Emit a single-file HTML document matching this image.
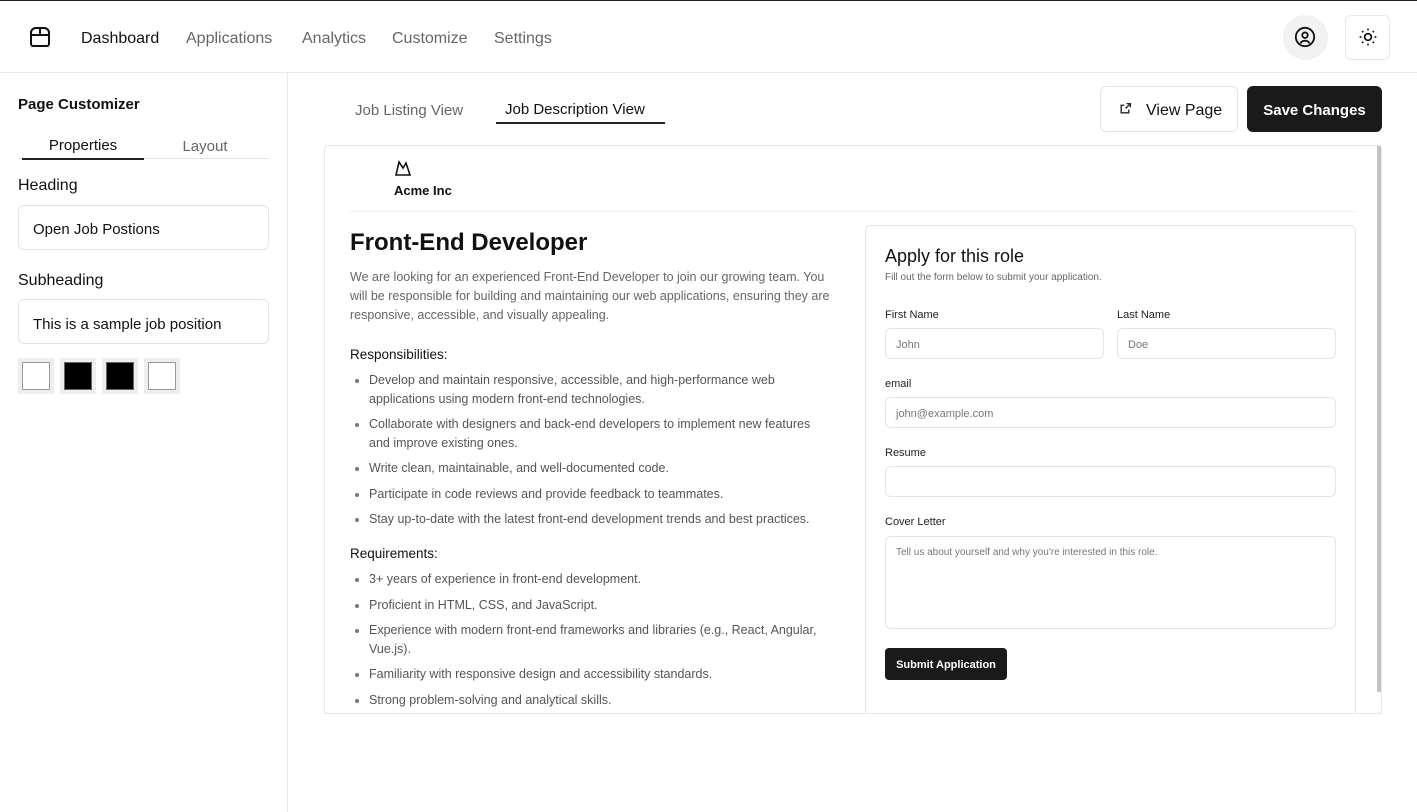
<!DOCTYPE html>
<html><head><meta charset="utf-8"><style>
*{box-sizing:border-box;margin:0;padding:0}
body{width:1417px;height:812px;overflow:hidden;background:#fff;font-family:"Liberation Sans",sans-serif;color:#111;position:relative}
.a{position:absolute}
.nav{font-size:16px;color:#666;top:30px}
.inp{border:1px solid #e4e4e4;border-radius:6px;background:#fff}
.lbl{font-size:11px;color:#222}
.ph{font-size:11px;color:#777;padding:0 10px;display:flex;align-items:center}
ul{list-style:disc;padding-left:19px;font-size:12.5px;color:#555;line-height:18.5px}
li{margin-bottom:7px}
li::marker{color:#777}
</style></head><body>
<div class="a" style="top:0;left:0;width:1417px;height:1px;background:#222"></div>
<svg class="a" style="left:28px;top:25px" width="24" height="24" viewBox="0 0 24 24" fill="none" stroke="#111" stroke-width="2"><path d="M3 9a5 5 0 0 1 5-6h8a5 5 0 0 1 5 6v10a2 2 0 0 1-2 2H5a2 2 0 0 1-2-2z"/><path d="M3 10h18M12 3v7"/></svg>
<div class="a nav" style="left:81px;color:#111">Dashboard</div>
<div class="a nav" style="left:186px">Applications</div>
<div class="a nav" style="left:302px">Analytics</div>
<div class="a nav" style="left:392px">Customize</div>
<div class="a nav" style="left:494px">Settings</div>
<div class="a" style="left:1283px;top:15px;width:45px;height:45px;border-radius:50%;background:#f2f2f2"></div>
<svg class="a" style="left:1294px;top:26px" width="22" height="22" viewBox="0 0 24 24" fill="none" stroke="#111" stroke-width="2"><circle cx="12" cy="12" r="10"/><circle cx="12" cy="10" r="3"/><path d="M7 19c1-2 3-3 5-3s4 1 5 3"/></svg>
<div class="a" style="left:1345px;top:15px;width:45px;height:45px;border-radius:6px;border:1px solid #e8e8e8"></div>
<svg class="a" style="left:1358px;top:27px" width="20" height="20" viewBox="0 0 24 24" fill="none" stroke="#111" stroke-width="2"><circle cx="12" cy="12" r="4"/><path d="M12 2v2M12 20v2M4.9 4.9l1.4 1.4M17.7 17.7l1.4 1.4M2 12h2M20 12h2M4.9 19.1l1.4-1.4M17.7 6.3l1.4-1.4"/></svg>
<div class="a" style="top:72px;left:0;width:1417px;height:1px;background:#e8e8e8"></div>
<div class="a" style="top:72px;left:287px;width:1px;height:740px;background:#e8e8e8"></div>

<div class="a" style="left:18px;top:96px;font-size:15px;font-weight:bold">Page Customizer</div>
<div class="a" style="left:22px;top:137px;width:122px;text-align:center;font-size:15px">Properties</div>
<div class="a" style="left:144px;top:138px;width:122px;text-align:center;font-size:15px;color:#666">Layout</div>
<div class="a" style="left:18px;top:158px;width:251px;height:1px;background:#e4e4e4"></div>
<div class="a" style="left:22px;top:158px;width:122px;height:2px;background:#222"></div>
<div class="a" style="left:18px;top:177px;font-size:16px">Heading</div>
<div class="a inp" style="left:18px;top:205px;width:251px;height:45px;font-size:15px;padding:15px 14px">Open Job Postions</div>
<div class="a" style="left:18px;top:272px;font-size:16px">Subheading</div>
<div class="a inp" style="left:18px;top:299px;width:251px;height:45px;font-size:15px;padding:16px 14px">This is a sample job position</div>
<div class="a" style="left:18px;top:358px;width:36px;height:36px;background:#eee;padding:4px"><div style="width:100%;height:100%;background:#fff;border:1px solid #999"></div></div>
<div class="a" style="left:60px;top:358px;width:36px;height:36px;background:#eee;padding:4px"><div style="width:100%;height:100%;background:#000;border:1px solid #666"></div></div>
<div class="a" style="left:102px;top:358px;width:36px;height:36px;background:#eee;padding:4px"><div style="width:100%;height:100%;background:#000;border:1px solid #666"></div></div>
<div class="a" style="left:144px;top:358px;width:36px;height:36px;background:#eee;padding:4px"><div style="width:100%;height:100%;background:#fff;border:1px solid #999"></div></div>

<div class="a" style="left:355px;top:102px;font-size:15px;color:#666">Job Listing View</div>
<div class="a" style="left:505px;top:101px;font-size:15px">Job Description View</div>
<div class="a" style="left:496px;top:122px;width:169px;height:2px;background:#222"></div>
<div class="a" style="left:1100px;top:86px;width:138px;height:46px;border:1px solid #e4e4e4;border-radius:6px"></div>
<svg class="a" style="left:1119px;top:102px" width="13" height="13" viewBox="0 0 24 24" fill="none" stroke="#222" stroke-width="2.5"><path d="M14 3h7v7M21 3l-9 9M18 14v6H4V6h6"/></svg>
<div class="a" style="left:1146px;top:102px;font-size:16px">View Page</div>
<div class="a" style="left:1247px;top:86px;width:135px;height:46px;background:#1a1a1a;border-radius:6px;color:#fff;font-size:15px;font-weight:bold;display:flex;align-items:center;justify-content:center;padding-top:2px">Save Changes</div>

<div class="a" style="left:324px;top:145px;width:1058px;height:569px;border:1px solid #e8e8e8;border-radius:4px"></div>
<div class="a" style="left:1377px;top:146px;width:4px;height:546px;background:#c4c4c4"></div>
<svg class="a" style="left:394px;top:160px" width="18" height="16" viewBox="0 0 18 16" fill="none" stroke="#111" stroke-width="1.6"><path d="M2 15L5 2l4 6 3-5 4 12z"/></svg>
<div class="a" style="left:394px;top:183px;font-size:13px;font-weight:bold">Acme Inc</div>
<div class="a" style="left:349px;top:211px;width:1007px;height:1px;background:#eee"></div>
<div class="a" style="left:350px;top:229px;font-size:24px;font-weight:bold">Front-End Developer</div>
<div class="a" style="left:350px;top:268px;width:490px;font-size:12.5px;color:#666;line-height:19px">We are looking for an experienced Front-End Developer to join our growing team. You will be responsible for building and maintaining our web applications, ensuring they are responsive, accessible, and visually appealing.</div>
<div class="a" style="left:350px;top:347px;font-size:13.5px">Responsibilities:</div>
<ul class="a" style="left:350px;top:371px;width:480px">
<li>Develop and maintain responsive, accessible, and high-performance web applications using modern front-end technologies.</li>
<li>Collaborate with designers and back-end developers to implement new features and improve existing ones.</li>
<li>Write clean, maintainable, and well-documented code.</li>
<li>Participate in code reviews and provide feedback to teammates.</li>
<li>Stay up-to-date with the latest front-end development trends and best practices.</li>
</ul>
<div class="a" style="left:350px;top:546px;font-size:13.5px">Requirements:</div>
<ul class="a" style="left:350px;top:570px;width:480px">
<li>3+ years of experience in front-end development.</li>
<li>Proficient in HTML, CSS, and JavaScript.</li>
<li>Experience with modern front-end frameworks and libraries (e.g., React, Angular, Vue.js).</li>
<li>Familiarity with responsive design and accessibility standards.</li>
<li>Strong problem-solving and analytical skills.</li>
</ul>

<div class="a" style="left:865px;top:225px;width:491px;height:500px;border:1px solid #e4e4e4;border-radius:6px"></div>
<div class="a" style="left:885px;top:246px;font-size:18px">Apply for this role</div>
<div class="a" style="left:885px;top:272px;font-size:10px;color:#666">Fill out the form below to submit your application.</div>
<div class="a lbl" style="left:885px;top:309px">First Name</div>
<div class="a lbl" style="left:1117px;top:309px">Last Name</div>
<div class="a inp ph" style="left:885px;top:328px;width:219px;height:31px;padding-top:2px">John</div>
<div class="a inp ph" style="left:1117px;top:328px;width:219px;height:31px;padding-top:2px">Doe</div>
<div class="a lbl" style="left:885px;top:378px">email</div>
<div class="a inp ph" style="left:885px;top:397px;width:451px;height:31px;padding-top:2px">john@example.com</div>
<div class="a lbl" style="left:885px;top:447px">Resume</div>
<div class="a inp" style="left:885px;top:466px;width:451px;height:31px"></div>
<div class="a lbl" style="left:885px;top:516px">Cover Letter</div>
<div class="a inp" style="left:885px;top:536px;width:451px;height:93px;font-size:10px;color:#777;padding:10px 10px">Tell us about yourself and why you're interested in this role.</div>
<div class="a" style="left:885px;top:648px;width:122px;height:32px;background:#1a1a1a;border-radius:4px;color:#fff;font-size:11px;font-weight:bold;display:flex;align-items:center;justify-content:center;padding-top:1px">Submit Application</div>
<div class="a" style="left:325px;top:714px;width:1057px;height:98px;background:#fff"></div>
<div class="a" style="left:324px;top:713px;width:1058px;height:1px;background:#e8e8e8"></div>
</body></html>
